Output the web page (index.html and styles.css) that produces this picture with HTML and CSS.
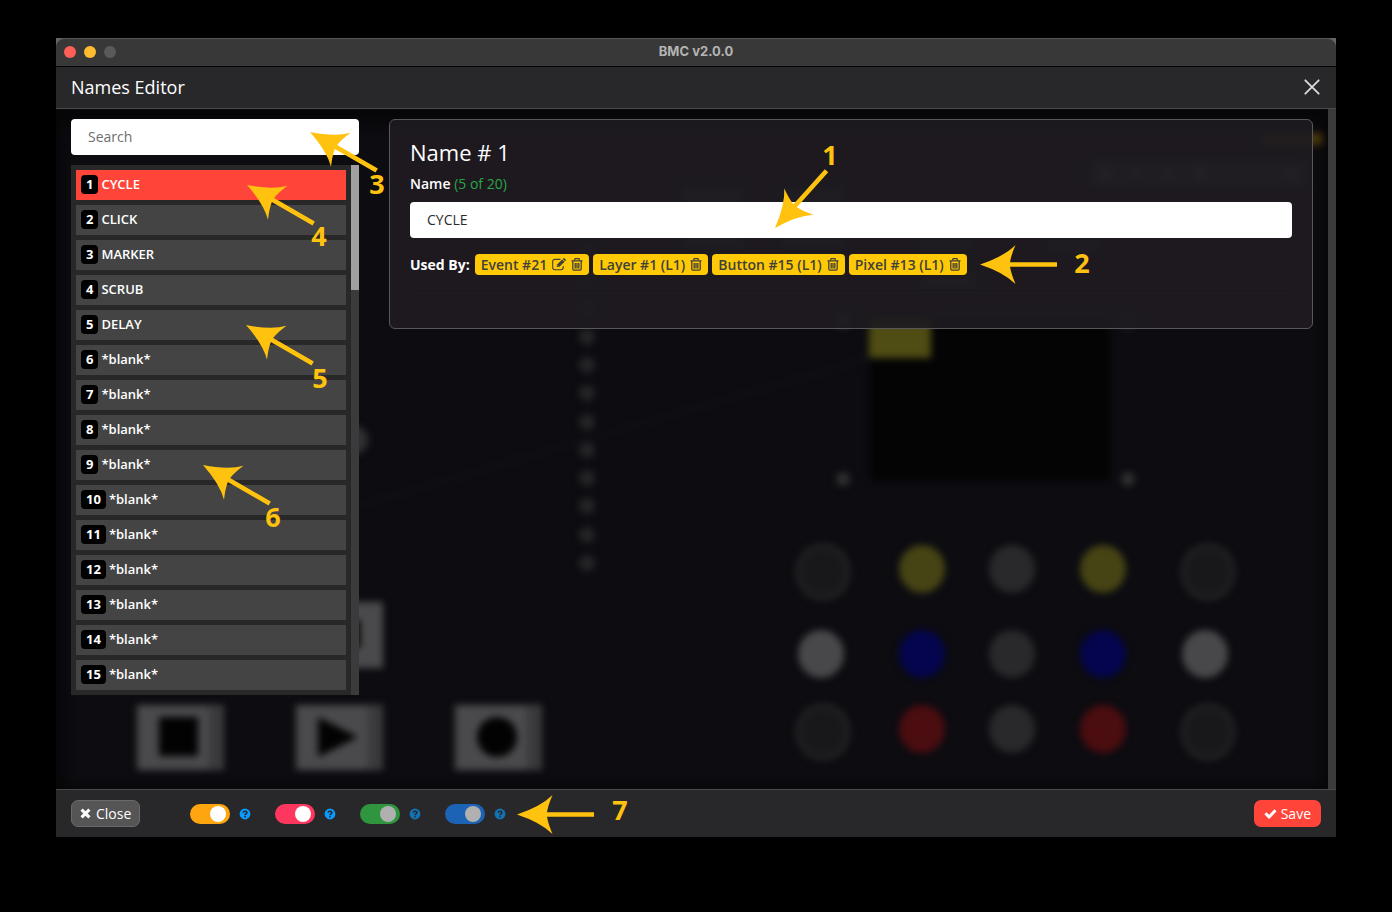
FILE: index.html
```html
<!DOCTYPE html>
<html lang="en">
<head>
<meta charset="utf-8">
<title>BMC v2.0.0</title>
<link rel="stylesheet" href="styles.css">
</head>
<body>
<svg class="sprite" aria-hidden="true">
  <symbol id="trash" viewBox="0 0 12 13">
    <path d="M3.700 2.400V1.300Q3.700.7 4.300.7h3.400q.6 0 .6.6v1.100" fill="none" stroke="currentColor" stroke-width="1.300"/>
    <path d="M.5 2.900h11M1.800 3.200v7.900q0 1.100 1.100 1.100h6.200q1.100 0 1.100-1.100V3.200M4.200 5v5.500M6 5v5.500M7.800 5v5.500" fill="none" stroke="currentColor" stroke-width="1.300"/>
  </symbol>
  <symbol id="edit" viewBox="0 0 14 13">
    <path d="M8.5 1.4H3Q.7 1.4.7 3.6v6Q.7 11.8 3 11.8h6q2.200 0 2.200-2.200V8" fill="none" stroke="currentColor" stroke-width="1.100"/>
    <path d="M4.8 9.1V6.8L10.2 1.4l2.4 2.4-5.4 5.3zM10.8.9l.6-.6q.5-.4 1 0l1.300 1.300q.5.5 0 1l-.6.6z" fill="currentColor"/>
    <path d="M5.300 7.200l1.400 1.400" stroke="#ffca05" stroke-width=".6"/>
  </symbol>
  <symbol id="times" viewBox="0 0 11 11">
    <path d="M1.600 1.600l7.800 7.800M9.400 1.600L1.600 9.400" stroke="currentColor" stroke-width="3.100"/>
  </symbol>
  <symbol id="check" viewBox="0 0 13 11">
    <path d="M1.400 5.300l3.700 3.700 6.400-6.800" fill="none" stroke="currentColor" stroke-width="2.900"/>
  </symbol>
  <symbol id="help" viewBox="0 0 12 12">
    <circle cx="6" cy="6" r="5.400" fill="currentColor"/>
    <path d="M4.100 4.700Q4.300 3.200 6 3.200q1.900 0 1.900 1.500 0 .8-1 1.300-.9.4-.9 1.200" fill="none" stroke="#28282a" stroke-width="1.500"/>
    <path d="M5.200 8h1.600v1.500H5.200z" fill="#28282a"/>
  </symbol>
</svg>

<div class="window">
  <div class="titlebar">
    <span class="light light-red"></span><span class="light light-yellow"></span><span class="light light-off"></span>
    <span class="window-title">BMC v2.0.0</span>
  </div>
  <header class="header">
    <h1>Names Editor</h1>
    <button class="dismiss" type="button" aria-label="Dismiss"><svg width="16" height="16" viewBox="0 0 16 16"><path d="M1.300 1.300l13.400 13.400M14.700 1.300L1.300 14.700" stroke="#dcdcdc" stroke-width="1.800" stroke-linecap="round"/></svg></button>
  </header>

  <main class="main">
    <svg class="backdrop" viewBox="56 109 1280 680" preserveAspectRatio="xMinYMin slice" aria-hidden="true">
      <defs>
        <filter id="soft" x="-20%" y="-20%" width="140%" height="140%" color-interpolation-filters="sRGB"><feGaussianBlur stdDeviation="3.500"/></filter>
        <filter id="wide" x="-10%" y="-10%" width="120%" height="120%" color-interpolation-filters="sRGB"><feGaussianBlur stdDeviation="6"/></filter>
      </defs>
      <rect x="56" y="109" width="1280" height="680" fill="#070709"/>
      <rect x="66" y="126" width="1256" height="658" fill="#0d0c11" filter="url(#wide)"/>
      <g filter="url(#soft)">
        <path d="M350 508L870 358" stroke="#0e1115" stroke-width="4"/>
        <path d="M296 602h87v66h-87zM137 705h87v65h-87zM296 705h87v65h-87zM455 705h87v65h-87z" fill="#4a4a4c"/>
        <path d="M209 706h15v63h-15zM368 706h15v63h-15zM527 706h15v63h-15z" fill="#3a3a3c"/>
        <path d="M159 717h39v39h-39zM318 717l40 20-40 20zM345 620h15v28h-15z" fill="#020203"/>
        <circle cx="497" cy="737" r="20" fill="#020203"/>
        <circle cx="354" cy="440" r="14" fill="#303032"/>
        <g fill="#252527">
          <circle cx="587" cy="252" r="9"/><circle cx="587" cy="280" r="9"/><circle cx="587" cy="308" r="9"/>
          <circle cx="587" cy="337" r="8"/><circle cx="587" cy="365" r="8"/><circle cx="587" cy="393" r="8"/><circle cx="587" cy="422" r="8"/><circle cx="587" cy="450" r="8"/><circle cx="587" cy="478" r="8"/><circle cx="587" cy="506" r="8"/><circle cx="587" cy="535" r="8"/><circle cx="587" cy="563" r="8"/>
        </g>
        <rect x="870" y="318" width="240" height="163" fill="#040405"/>
        <rect x="869" y="318" width="62" height="40" fill="#4f4c14"/>
        <g fill="#2f2f31"><circle cx="843" cy="479" r="7"/><circle cx="1128" cy="479" r="7"/><circle cx="843" cy="320" r="8"/><circle cx="1128" cy="320" r="8"/></g>
        <rect x="1262" y="133" width="60" height="12" fill="#49360a"/>
        <rect x="1090" y="160" width="216" height="27" rx="5" fill="#303034"/>
        <g fill="#5a5a60"><circle cx="1106" cy="174" r="7"/><circle cx="1137" cy="174" r="5"/><circle cx="1168" cy="174" r="6"/><circle cx="1201" cy="174" r="7"/><circle cx="1290" cy="174" r="6"/></g>
        <path d="M682 187h62v60h-62zM782 187h62v60h-62zM921 238h50v14h-50zM1048 238h50v14h-50zM920 273h56v18h-56z" fill="#2c2e32"/>
        <g fill="#18181a" stroke="#202022" stroke-width="6"><ellipse cx="823" cy="572" rx="25" ry="26"/><ellipse cx="1208" cy="572" rx="25" ry="26"/><ellipse cx="823" cy="732" rx="25" ry="26"/><ellipse cx="1208" cy="732" rx="25" ry="26"/></g>
        <g fill="#464414"><ellipse cx="922" cy="569" rx="23" ry="24"/><ellipse cx="1103" cy="569" rx="23" ry="24"/></g>
        <g fill="#29292b"><ellipse cx="1012" cy="569" rx="23" ry="24"/><ellipse cx="1012" cy="654" rx="23" ry="24"/><ellipse cx="1012" cy="729" rx="23" ry="24"/></g>
        <g fill="#48484a"><ellipse cx="821" cy="654" rx="23" ry="24"/><ellipse cx="1205" cy="654" rx="23" ry="24"/></g>
        <g fill="#04054e"><ellipse cx="922" cy="654" rx="23" ry="24"/><ellipse cx="1103" cy="654" rx="23" ry="24"/></g>
        <g fill="#4b0d10"><ellipse cx="922" cy="729" rx="23" ry="24"/><ellipse cx="1103" cy="729" rx="23" ry="24"/></g>
      </g>
    </svg>

    <div class="columns">
      <aside class="sidebar">
        <input class="field" type="search" placeholder="Search" aria-label="Search">
        <div class="list-box">
          <div class="list">
            <button class="item active" type="button"><b>1</b>CYCLE</button>
            <button class="item" type="button"><b>2</b>CLICK</button>
            <button class="item" type="button"><b>3</b>MARKER</button>
            <button class="item" type="button"><b>4</b>SCRUB</button>
            <button class="item" type="button"><b>5</b>DELAY</button>
            <button class="item" type="button"><b>6</b>*blank*</button>
            <button class="item" type="button"><b>7</b>*blank*</button>
            <button class="item" type="button"><b>8</b>*blank*</button>
            <button class="item" type="button"><b>9</b>*blank*</button>
            <button class="item" type="button"><b>10</b>*blank*</button>
            <button class="item" type="button"><b>11</b>*blank*</button>
            <button class="item" type="button"><b>12</b>*blank*</button>
            <button class="item" type="button"><b>13</b>*blank*</button>
            <button class="item" type="button"><b>14</b>*blank*</button>
            <button class="item" type="button"><b>15</b>*blank*</button>
          </div>
          <div class="track"><div class="thumb"></div></div>
        </div>
      </aside>
      <section class="panel">
        <h2>Name # 1</h2>
        <label for="name">Name <span class="count">(5 of 20)</span></label>
        <input class="field" id="name" type="text" value="CYCLE">
        <div class="used">
          <strong>Used By:</strong>
          <span class="tag">Event #21 <button type="button" aria-label="Edit event"><svg width="14" height="13"><use href="#edit"/></svg></button> <button type="button" aria-label="Remove from event"><svg width="12" height="13"><use href="#trash"/></svg></button></span>
          <span class="tag">Layer #1 (L1) <button type="button" aria-label="Remove from layer"><svg width="12" height="13"><use href="#trash"/></svg></button></span>
          <span class="tag">Button #15 (L1) <button type="button" aria-label="Remove from button"><svg width="12" height="13"><use href="#trash"/></svg></button></span>
          <span class="tag">Pixel #13 (L1) <button type="button" aria-label="Remove from pixel"><svg width="12" height="13"><use href="#trash"/></svg></button></span>
        </div>
        <hr>
      </section>
    </div>
    <div class="track page-track"></div>
  </main>

  <footer class="footer">
    <button class="btn btn-close" type="button"><svg width="11" height="11"><use href="#times"/></svg>Close</button>
    <div class="toggles">
      <div class="toggle"><input class="orange" type="checkbox" checked aria-label="Option 1"><button type="button" aria-label="Help 1"><svg width="12" height="12"><use href="#help"/></svg></button></div>
      <div class="toggle"><input class="pink" type="checkbox" checked aria-label="Option 2"><button type="button" aria-label="Help 2"><svg width="12" height="12"><use href="#help"/></svg></button></div>
      <div class="toggle dim"><input class="green" type="checkbox" checked disabled aria-label="Option 3"><button type="button" aria-label="Help 3"><svg width="12" height="12"><use href="#help"/></svg></button></div>
      <div class="toggle dim"><input class="blue" type="checkbox" checked disabled aria-label="Option 4"><button type="button" aria-label="Help 4"><svg width="12" height="12"><use href="#help"/></svg></button></div>
    </div>
    <button class="btn btn-save" type="button"><svg width="13" height="11"><use href="#check"/></svg>Save</button>
  </footer>
</div>

<svg class="callouts" viewBox="0 0 1392 912" preserveAspectRatio="xMinYMin slice">
  <defs><path id="arrow" d="M0 0Q24-8 35.500-19.500Q31-9 30-2.300H77V2.300H30Q31 9 35.500 19.500Q24 8 0 0z"/></defs>
  <use href="#arrow" transform="translate(775 228) rotate(-48)"/>
  <use href="#arrow" transform="translate(980 264.500)"/>
  <use href="#arrow" transform="translate(310 132) rotate(30)"/>
  <use href="#arrow" transform="translate(247 185) rotate(30)"/>
  <use href="#arrow" transform="translate(246 325) rotate(30)"/>
  <use href="#arrow" transform="translate(203 465) rotate(30)"/>
  <use href="#arrow" transform="translate(517 814.500)"/>
  <text x="830" y="165">1</text>
  <text x="1082" y="273">2</text>
  <text x="377" y="194">3</text>
  <text x="319" y="246">4</text>
  <text x="320" y="388">5</text>
  <text x="273" y="527">6</text>
  <text x="620" y="820">7</text>
</svg>
</body>
</html>
```
FILE: styles.css
```css
* { box-sizing: border-box; }

body {
  margin: 0;
  min-height: 100vh;
  padding: 38px 56px 75px;
  display: flex;
  background: #000;
  color: #fff;
  font: 14px/20px "Open Sans", "Noto Sans", sans-serif;
  position: relative;
}

button, input { font: inherit; color: inherit; margin: 0; }
button { border: 0; padding: 0; background: none; cursor: pointer; }
svg { display: block; }
.sprite { position: absolute; width: 0; height: 0; }

.window { flex: 1; min-width: 0; display: flex; flex-direction: column; background: linear-gradient(#666 0 20px, #28282a 20px); }

.titlebar {
  height: 29px;
  display: flex;
  align-items: center;
  gap: 8px;
  padding: 0 8px 2px;
  background: #383838;
  border-top: 1px solid #565656;
  border-bottom: 1px solid #000;
  border-radius: 9px 9px 0 0;
  position: relative;
}
.light { width: 12px; height: 12px; border-radius: 50%; }
.light-red { background: #ff5f57; }
.light-yellow { background: #febc2e; }
.light-off { background: #5a5a5a; }
.window-title {
  position: absolute;
  inset: 0;
  text-align: center;
  font: bold 13px/24px Inter, sans-serif;
  color: #b4b4b4;
}

.header {
  display: flex;
  align-items: center;
  justify-content: space-between;
  height: 42px;
  padding: 0 16px 2px 15px;
  background: #28282a;
  border-bottom: 1px solid #4a4a4c;
}
h1, h2 { margin: 0; }
h1 { font-size: 18px; line-height: 24px; font-weight: 500; }

.main { flex: 1; display: flex; position: relative; }
.backdrop { position: absolute; inset: 0; width: 100%; height: 100%; }
.columns {
  flex: 1;
  min-width: 0;
  display: flex;
  align-items: flex-start;
  gap: 30px;
  padding: 10px 15px;
  position: relative;
}
.track { width: 8px; background: #3b3b3b; position: relative; }
.thumb { height: 125px; background: #a0a0a0; }

.sidebar { flex: 0 0 288px; display: grid; gap: 10px; }
.field {
  width: 100%;
  height: 36px;
  padding: 0 17px 2px;
  border: 0;
  border-radius: 4px;
  background: #fff;
  color: #2b2b2b;
  appearance: none;
}
.field::placeholder { color: #6e6e6e; opacity: 1; }
.list-box { display: flex; background: #282828; }
.list { flex: 1; display: grid; gap: 5px; padding: 5px; }
.item {
  display: flex;
  align-items: center;
  gap: 3px;
  height: 30px;
  padding: 0 5px 2px;
  background: #444;
  font-size: 13px;
  font-weight: 600;
  text-align: left;
}
.item.active { background: #ff453a; }
.item b {
  padding: 0 5px;
  border-radius: 4px;
  background: #000;
  font-weight: 700;
  line-height: 19px;
}

.panel {
  flex: 1;
  min-width: 0;
  min-height: 210px;
  padding: 19px 20px 20px;
  background: rgba(30, 27, 33, .92);
  border: 1px solid #58585a;
  border-radius: 6px;
}
h2 { font-size: 22px; line-height: 26px; font-weight: 400; }
.panel label { display: block; margin: 9px 0 8px; font-weight: 600; }
.count { color: #28a745; font-weight: 500; }
.used { display: flex; flex-wrap: wrap; gap: 4px; margin-top: 16px; line-height: 21px; }
.used strong { font-weight: 700; margin-right: 1px; }
.tag {
  display: flex;
  align-items: center;
  gap: 5px;
  padding: 0 6px;
  border-radius: 4px;
  background: #ffca05;
  color: #41403a;
  font-weight: 600;
}
hr { margin: 15px 0 0; border: 0; border-top: 1px solid #19171c; }

.footer {
  display: flex;
  align-items: center;
  height: 48px;
  padding: 0 15px;
  background: #28282a;
  border-top: 1px solid #4a4a4c;
}
.btn {
  display: flex;
  align-items: center;
  height: 27px;
  border-radius: 7px;
  font-weight: 500;
}
.btn-close { gap: 5px; background: #555; border: 1px solid #6a6a6a; padding: 0 8px; }
.btn-save { gap: 4px; background: #ff453a; margin-left: auto; padding: 0 10px; }
.toggles { display: flex; gap: 24px; margin-left: 50px; }
.toggle { display: flex; align-items: center; gap: 9px; }
.toggle button { color: #0a9bff; }
.toggle input {
  appearance: none;
  width: 40px;
  height: 20px;
  padding: 2px 4px;
  border-radius: 10px;
  display: flex;
  justify-content: flex-end;
}
.toggle input::before { content: ""; width: 16px; height: 16px; border-radius: 50%; background: #fff; }
.toggle.dim input::before { background: #b0b0b0; }
.toggle.dim button { color: #1273b5; }
.orange { background: #ffa50f; }
.pink { background: #ff375f; }
.green { background: #2f963f; }
.blue { background: #1c62b5; }

.callouts { position: absolute; inset: 0; width: 100%; height: 100%; fill: #ffc20e; pointer-events: none; }
.callouts text { font-size: 27px; font-weight: 700; text-anchor: middle; }
```
